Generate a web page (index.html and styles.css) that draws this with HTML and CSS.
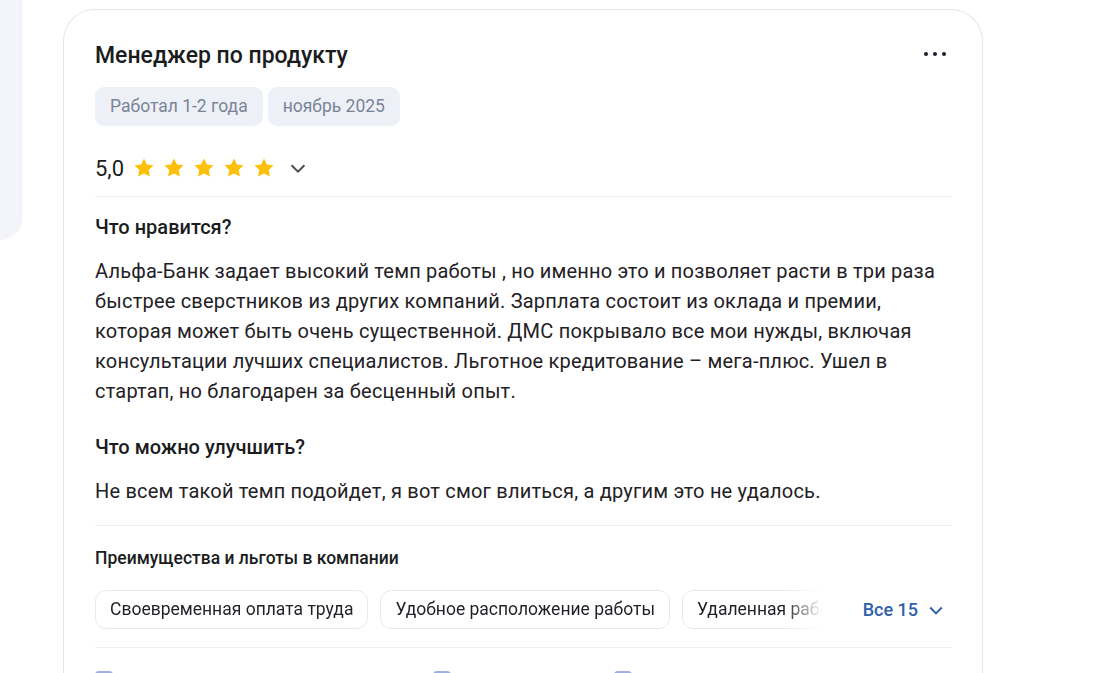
FILE: index.html
```html
<!DOCTYPE html>
<html lang="ru">

<head>
  <meta charset="UTF-8">
  <title>Отзыв</title>
  <link rel="stylesheet" href="styles.css">
</head>

<body>
  <div class="page">
    <div class="side"></div>

    <div class="review">
      <div class="review_head">
        <h2 class="review_title">Менеджер по продукту</h2>
        <a href="javascript:;" class="more">
          <span></span><span></span><span></span>
        </a>
      </div>

      <div class="tags">
        <span class="tag">Работал 1-2 года</span>
        <span class="tag">ноябрь 2025</span>
      </div>

      <div class="rating">
        <span class="rating_value">5,0</span>
        <div class="stars">
          <svg viewBox="0 0 24 24"><path d="M12 1.5l3.2 6.6 7.2 1-5.2 5.1 1.3 7.2L12 18l-6.5 3.4 1.3-7.2L1.6 9.1l7.2-1z"/></svg>
          <svg viewBox="0 0 24 24"><path d="M12 1.5l3.2 6.6 7.2 1-5.2 5.1 1.3 7.2L12 18l-6.5 3.4 1.3-7.2L1.6 9.1l7.2-1z"/></svg>
          <svg viewBox="0 0 24 24"><path d="M12 1.5l3.2 6.6 7.2 1-5.2 5.1 1.3 7.2L12 18l-6.5 3.4 1.3-7.2L1.6 9.1l7.2-1z"/></svg>
          <svg viewBox="0 0 24 24"><path d="M12 1.5l3.2 6.6 7.2 1-5.2 5.1 1.3 7.2L12 18l-6.5 3.4 1.3-7.2L1.6 9.1l7.2-1z"/></svg>
          <svg viewBox="0 0 24 24"><path d="M12 1.5l3.2 6.6 7.2 1-5.2 5.1 1.3 7.2L12 18l-6.5 3.4 1.3-7.2L1.6 9.1l7.2-1z"/></svg>
        </div>
        <svg class="chevron" viewBox="0 0 24 24"><path d="M5 9l7 7 7-7"/></svg>
      </div>

      <div class="review_body">
        <h3 class="review_label">Что нравится?</h3>
        <p class="review_text">Альфа-Банк задает высокий темп работы , но именно это и позволяет расти в три раза быстрее сверстников из других компаний. Зарплата состоит из оклада и премии, которая может быть очень существенной. ДМС покрывало все мои нужды, включая консультации лучших специалистов. Льготное кредитование – мега-плюс. Ушел в стартап, но благодарен за бесценный опыт.</p>

        <h3 class="review_label second">Что можно улучшить?</h3>
        <p class="review_text">Не всем такой темп подойдет, я вот смог влиться, а другим это не удалось.</p>
      </div>

      <div class="benefits">
        <h4 class="benefits_title">Преимущества и льготы в компании</h4>
        <div class="benefits_row">
          <div class="chips">
            <span class="chip">Своевременная оплата труда</span>
            <span class="chip">Удобное расположение работы</span>
            <span class="chip">Удаленная работа</span>
          </div>
          <a href="javascript:;" class="all">
            Все 15
            <svg viewBox="0 0 24 24"><path d="M5 9l7 7 7-7"/></svg>
          </a>
        </div>
      </div>

      <div class="actions">
        <span class="action"><i></i></span>
        <span class="action"><i></i></span>
        <span class="action"><i></i></span>
      </div>
    </div>
  </div>
</body>

</html>
```

FILE: styles.css
```css
* {
  margin: 0;
  padding: 0;
  box-sizing: border-box;
}

a {
  text-decoration: none;
}

body {
  background: #fff;
  font-family: Roboto, "Noto Sans", Arial, sans-serif;
  color: #1f2126;
}

.page {
  display: flex;
  align-items: flex-start;
}

.side {
  width: 22px;
  height: 240px;
  background-color: #f4f5fa;
  border-right: 1px solid #eceff5;
  border-bottom-right-radius: 22px;
  flex-shrink: 0;
}

.review {
  width: 920px;
  margin: 9px 0 0 41px;
  padding: 32px 30px 0 31px;
  border: 1px solid #e1e5ee;
  border-bottom: none;
  border-radius: 32px 32px 0 0;
  min-height: 700px;
}

.review_head {
  display: flex;
  justify-content: space-between;
  align-items: center;
}

.review_title {
  font-size: 23px;
  line-height: 28px;
  font-weight: 500;
  color: #1a1c20;
}

.more {
  display: flex;
  gap: 5px;
  padding: 0 6px;
  margin-top: -5px;
}

.more span {
  width: 4px;
  height: 4px;
  border-radius: 50%;
  background-color: #1a1f2e;
}

.tags {
  display: flex;
  gap: 5px;
  margin-top: 17px;
}

.tag {
  padding: 8px 15px;
  font-size: 17.5px;
  line-height: 23px;
  color: #7a8498;
  background-color: #edf0f6;
  border-radius: 9px;
}

.rating {
  display: flex;
  align-items: center;
  height: 36px;
  margin-top: 24px;
  padding-bottom: 10px;
  box-sizing: content-box;
  border-bottom: 1px solid #eef0f4;
}

.rating_value {
  font-size: 22px;
  color: #1a1c20;
  margin-right: 9px;
}

.stars {
  display: flex;
  gap: 8px;
}

.stars svg {
  width: 22px;
  height: 22px;
  fill: #fec109;
}

.chevron {
  width: 22px;
  height: 22px;
  margin-left: 12px;
  fill: none;
  stroke: #4a4d55;
  stroke-width: 2.2;
}

.review_body {
  padding: 17px 0 19px;
  border-bottom: 1px solid #eef0f4;
}

.review_label {
  font-size: 20px;
  line-height: 26px;
  font-weight: 500;
  color: #1a1c20;
}

.review_label.second {
  margin-top: 28px;
}

.review_text {
  margin-top: 16px;
  font-size: 20px;
  line-height: 30px;
  letter-spacing: 0.2px;
  color: #1f2126;
}

.benefits {
  padding: 20px 0 18px;
  border-bottom: 1px solid #eef0f4;
}

.benefits_title {
  font-size: 17.5px;
  line-height: 24px;
  font-weight: 500;
  color: #1a1c20;
}

.benefits_row {
  display: flex;
  align-items: center;
  margin-top: 20px;
}

.chips {
  flex: 1;
  display: flex;
  gap: 12px;
  overflow: hidden;
  white-space: nowrap;
  max-width: 727px;
  -webkit-mask-image: linear-gradient(to right, #000 690px, transparent 727px);
  mask-image: linear-gradient(to right, #000 690px, transparent 727px);
}

.chip {
  flex-shrink: 0;
  padding: 7px 14px;
  font-size: 17.5px;
  line-height: 23px;
  color: #1f2126;
  border: 1px solid #e6e9f0;
  border-radius: 11px;
}

.all {
  display: flex;
  align-items: center;
  gap: 8px;
  margin-left: auto;
  padding-right: 6px;
  font-size: 18px;
  font-weight: 500;
  color: #3161a8;
}

.all svg {
  width: 20px;
  height: 20px;
  fill: none;
  stroke: #3161a8;
  stroke-width: 2.4;
}

.actions {
  display: flex;
  padding-top: 23px;
}

.action {
  display: inline-flex;
  width: 390px;
}

.action:nth-child(2) {
  width: 210px;
}

.action i {
  width: 18px;
  height: 18px;
  border: 2px solid #9fb0dd;
  border-radius: 4px;
}
```
